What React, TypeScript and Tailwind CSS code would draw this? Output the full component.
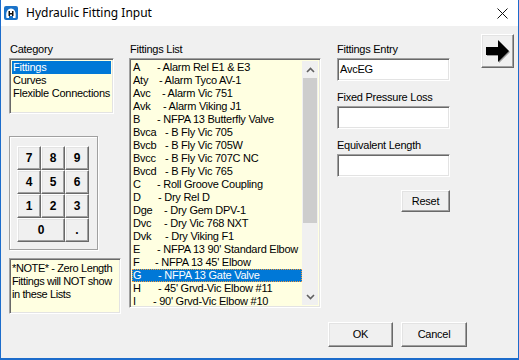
import React from "react";

const fittings = [
  { code: "A", w: "w-[24px]", desc: "- Alarm Rel E1 & E3" },
  { code: "Aty", w: "w-[26px]", desc: "- Alarm Tyco AV-1" },
  { code: "Avc", w: "w-[29px]", desc: "- Alarm Vic 751" },
  { code: "Avk", w: "w-[30px]", desc: "- Alarm Viking J1" },
  { code: "B", w: "w-[24px]", desc: "- NFPA 13 Butterfly Valve" },
  { code: "Bvca", w: "w-[32px]", desc: "- B Fly Vic 705" },
  { code: "Bvcb", w: "w-[32px]", desc: "- B Fly Vic 705W" },
  { code: "Bvcc", w: "w-[32px]", desc: "- B Fly Vic 707C NC" },
  { code: "Bvcd", w: "w-[32px]", desc: "- B Fly Vic 765" },
  { code: "C", w: "w-[24px]", desc: "- Roll Groove Coupling" },
  { code: "D", w: "w-[25px]", desc: "- Dry Rel D" },
  { code: "Dge", w: "w-[31px]", desc: "- Dry Gem DPV-1" },
  { code: "Dvc", w: "w-[31px]", desc: "- Dry Vic 768 NXT" },
  { code: "Dvk", w: "w-[32px]", desc: "- Dry Viking F1" },
  { code: "E", w: "w-[24px]", desc: "- NFPA 13 90' Standard Elbow" },
  { code: "F", w: "w-[22px]", desc: "- NFPA 13 45' Elbow" },
  { code: "G", w: "w-[25px]", desc: "- NFPA 13 Gate Valve", sel: true },
  { code: "H", w: "w-[25px]", desc: "- 45' Grvd-Vic Elbow #11" },
  { code: "I", w: "w-[20px]", desc: "- 90' Grvd-Vic Elbow #10" },
];

// classic 3D edges
const sunken =
  "border border-t-[#a0a0a0] border-l-[#a0a0a0] border-b-white border-r-white shadow-[inset_1px_1px_0_#696969,inset_-1px_-1px_0_#e3e3e3]";
const raised =
  "border border-t-white border-l-white border-b-[#696969] border-r-[#696969] shadow-[inset_-1px_-1px_0_#a0a0a0,inset_1px_1px_0_#e3e3e3] bg-[#f0f0f0]";

function KeyBtn({ label, wide }: { label: string; wide?: boolean }) {
  return (
    <button
      className={`${raised} ${wide ? "col-span-2" : ""} h-[24px] flex items-center justify-center text-[12px] font-bold text-black tracking-normal`}
    >
      {label}
    </button>
  );
}

function Field({ label, value, first }: { label: string; value?: string; first?: boolean }) {
  return (
    <div className={`flex flex-col ${first ? "" : "mt-[10px]"}`}>
      <div className="h-[13px] leading-[13px]">{label}</div>
      <div className={`${sunken} mt-[2px] h-[23px] w-[113px] bg-white px-[2px] leading-[21px]`}>{value}</div>
    </div>
  );
}

function Chevron({ down }: { down?: boolean }) {
  return (
    <svg width="9" height="6" viewBox="0 0 9 6" className={down ? "rotate-180" : ""}>
      <polyline points="1,5 4.5,1.5 8,5" fill="none" stroke="#606060" strokeWidth="1.6" />
    </svg>
  );
}

export default function App() {
  return (
    <div
      className="w-[519px] h-[360px] flex flex-col text-[11px] tracking-[-0.25px] text-black overflow-hidden"
      style={{ fontFamily: '"Liberation Sans", Arial, sans-serif' }}
    >
      {/* title bar */}
      <div className="h-[26px] bg-white flex items-center border-x border-[#1c6ccb]">
        <svg width="14" height="14" viewBox="0 0 14 14" className="ml-[3px]">
          <rect x="0" y="0" width="14" height="14" rx="2" fill="#1a73c9" />
          <path d="M2.5 12 C1.5 6 3.5 2.5 7 2.5 C10.5 2.5 12.5 6 11.5 12 L9 12 L9 10 L5 10 L5 12 Z" fill="#fff" />
          <path d="M4.5 10 L4.5 5 L6 5 L6 7 L8 7 L8 5 L9.5 5 L9.5 10 L8 10 L8 8.5 L6 8.5 L6 10 Z" fill="#111" />
        </svg>
        <span
          className="ml-[8px] text-[12px] tracking-normal text-black"
          style={{ fontFamily: '"Segoe UI", "Noto Sans", sans-serif' }}
        >
          Hydraulic Fitting Input
        </span>
        <svg width="11" height="11" viewBox="0 0 11 11" className="ml-auto mr-[10px]">
          <path d="M0.5 0.5 L10.5 10.5 M10.5 0.5 L0.5 10.5" stroke="#111" strokeWidth="1" />
        </svg>
      </div>

      {/* body */}
      <div className="flex-1 flex flex-col bg-[#f0f0f0] border-x border-b-2 border-[#1c6ccb] pt-[8px]">
        <div className="flex items-start">
          {/* left column */}
          <div className="ml-[8px] mt-[9px] w-[112px] flex flex-col">
            <div className="h-[13px] leading-[13px] pl-[1px]">Category</div>
            <div className={`${sunken} mt-[2px] w-[105px] h-[56px] bg-[#ffffe1] p-[2px]`}>
              <div className="h-[13px] leading-[13px] bg-[#0078d7] text-white px-[1px] whitespace-nowrap">Fittings</div>
              <div className="h-[13px] leading-[13px] px-[1px] whitespace-nowrap">Curves</div>
              <div className="h-[13px] leading-[13px] px-[1px] whitespace-nowrap">Flexible Connections</div>
            </div>

            <div className="mt-[22px] w-[89px] h-[114px] border border-[#a0a0a0] shadow-[inset_1px_1px_0_#fff,1px_1px_0_#fff] pl-[7px] pt-[9px]">
              <div className="grid grid-cols-[24px_24px_24px]">
                {["7", "8", "9", "4", "5", "6", "1", "2", "3"].map((k) => (
                  <KeyBtn key={k} label={k} />
                ))}
                <KeyBtn label="0" wide />
                <KeyBtn label="." />
              </div>
            </div>

            <div className={`${sunken} mt-[8px] h-[56px] bg-[#ffffe1] pl-[2px] pr-0 pt-[3px] leading-[13px] tracking-[-0.4px]`}>
              *NOTE* - Zero Length Fittings will NOT show in these Lists
            </div>
          </div>

          {/* fittings list */}
          <div className="ml-[8px] mt-[9px] flex flex-col">
            <div className="h-[13px] leading-[13px] pl-[1px]">Fittings List</div>
            <div className={`${sunken} mt-[2px] w-[192px] h-[250px] bg-[#ffffe1] p-[2px] flex overflow-hidden`}>
              <div className="flex-1 flex flex-col overflow-hidden">
                {fittings.map((f) => (
                  <div
                    key={f.code}
                    className={`h-[13px] shrink-0 leading-[13px] flex whitespace-nowrap pl-[1px] ${
                      f.sel ? "bg-[#0078d7] text-white outline outline-1 outline-dotted outline-[#f29a38] -outline-offset-1" : ""
                    }`}
                  >
                    <span className={`${f.w} shrink-0`}>{f.code}</span>
                    <span>{f.desc}</span>
                  </div>
                ))}
              </div>
              <div className="w-[16px] shrink-0 bg-[#f0f0f0] flex flex-col items-center">
                <div className="h-[17px] flex items-center justify-center">
                  <Chevron />
                </div>
                <div className="w-[14px] h-[145px] bg-[#cdcdcd]" />
                <div className="flex-1" />
                <div className="h-[17px] flex items-center justify-center">
                  <Chevron down />
                </div>
              </div>
            </div>
          </div>

          {/* entry fields */}
          <div className="ml-[16px] mt-[9px] w-[113px] flex flex-col">
            <Field label="Fittings Entry" value="AvcEG" first />
            <Field label="Fixed Pressure Loss" />
            <Field label="Equivalent Length" />
            <div className="mt-[13px] flex justify-end">
              <button className={`${raised} w-[49px] h-[22px]`}>Reset</button>
            </div>
          </div>

          {/* go arrow */}
          <button className={`${raised} ml-[31px] w-[33px] h-[34px] flex items-center justify-center`}>
            <svg width="27" height="26" viewBox="0 0 27 26">
              <polygon points="2,9 14,9 14,2 25,13 14,24 14,17 2,17" fill="#9a9a9a" transform="translate(1,1)" />
              <polygon points="2,9 14,9 14,2 25,13 14,24 14,17 2,17" fill="#000" />
            </svg>
          </button>
        </div>

        {/* dialog buttons */}
        <div className="mt-[8px] flex justify-end pr-[51px] gap-[8px]">
          <button className={`${raised} w-[65px] h-[25px]`}>OK</button>
          <button className={`${raised} w-[66px] h-[25px]`}>Cancel</button>
        </div>
      </div>
    </div>
  );
}
